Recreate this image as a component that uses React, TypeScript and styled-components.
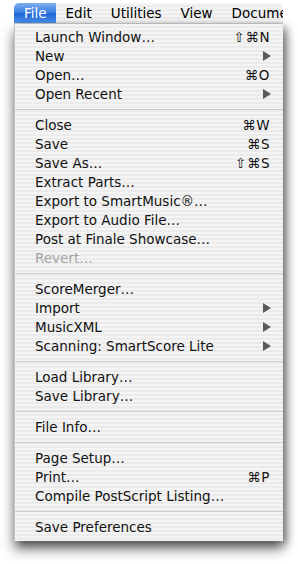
import React from "react";
import { styled, createGlobalStyle } from "styled-components";

const Global = createGlobalStyle`
    html, body {
        margin: 0;
        padding: 0;
        background: #ffffff;
    }
    body {
        font-family: "DejaVu Sans", "Liberation Sans", sans-serif;
    }
`

const pinstripe = `repeating-linear-gradient(
    to bottom,
    #f4f4f4 0px,
    #f4f4f4 2px,
    #ebebeb 2px,
    #ebebeb 4px
)`

const Stage = styled.div`
    width: 298px;
    height: 564px;
    padding: 3px 0 0 14px;
    box-sizing: border-box;
`

const Frame = styled.div`
    width: 269px;
    display: flex;
    flex-direction: column;
`

const MenuBar = styled.div`
    height: 20px;
    display: flex;
    align-items: stretch;
    background: ${pinstripe};
    border-top-left-radius: 5px;
    border-top-right-radius: 5px;
    overflow: hidden;
    border-bottom: 1px solid #cfcfcf;
`

const BarItem = styled.div<{ $active?: boolean }>`
    display: flex;
    align-items: center;
    padding: 0 9px 0 10px;
    font-size: 13.5px;
    white-space: nowrap;
    color: ${p => (p.$active ? "#ffffff" : "#000000")};
    background: ${p => (p.$active
        ? "linear-gradient(to bottom, #7fb1f0 0%, #3d80e4 45%, #2467d8 55%, #4a92ef 100%)"
        : "transparent")};
`

const Panel = styled.div`
    height: 517px;
    box-sizing: border-box;
    padding: 3px 0 5px;
    background: ${pinstripe};
    box-shadow: 0 8px 12px rgba(0, 0, 0, 0.55), 4px 3px 8px rgba(0, 0, 0, 0.35);
    border-left: 1px solid #c4c4c4;
    display: flex;
    flex-direction: column;
`

const Item = styled.div<{ $disabled?: boolean }>`
    height: 19px;
    display: flex;
    align-items: center;
    justify-content: space-between;
    padding: 0 13px 0 20px;
    font-size: 13.5px;
    white-space: nowrap;
    color: ${p => (p.$disabled ? "#a3a3a3" : "#111111")};
`

const Shortcut = styled.span`
    font-size: 13.5px;
    letter-spacing: 0.5px;
`

const Separator = styled.div`
    height: 12px;
    display: flex;
    align-items: center;
    &::after {
        content: "";
        flex: 1;
        height: 1px;
        background: #cbcbcb;
    }
`

const Arrow = () => (
    <svg width="8" height="10" viewBox="0 0 8 10" style={{ marginRight: -1 }}>
        <path d="M0 0 L8 5 L0 10 Z" fill="#5a5a5a" />
    </svg>
)

type Entry =
    | { label: string; key?: string; sub?: boolean; disabled?: boolean }
    | "sep";

const entries: Entry[] = [
    { label: "Launch Window…", key: "⇧⌘N" },
    { label: "New", sub: true },
    { label: "Open…", key: "⌘O" },
    { label: "Open Recent", sub: true },
    "sep",
    { label: "Close", key: "⌘W" },
    { label: "Save", key: "⌘S" },
    { label: "Save As…", key: "⇧⌘S" },
    { label: "Extract Parts…" },
    { label: "Export to SmartMusic®…" },
    { label: "Export to Audio File…" },
    { label: "Post at Finale Showcase…" },
    { label: "Revert…", disabled: true },
    "sep",
    { label: "ScoreMerger…" },
    { label: "Import", sub: true },
    { label: "MusicXML", sub: true },
    { label: "Scanning: SmartScore Lite", sub: true },
    "sep",
    { label: "Load Library…" },
    { label: "Save Library…" },
    "sep",
    { label: "File Info…" },
    "sep",
    { label: "Page Setup…" },
    { label: "Print…", key: "⌘P" },
    { label: "Compile PostScript Listing…" },
    "sep",
    { label: "Save Preferences" },
]

const App: React.FC = () => {
    return (
        <Stage>
            <Global />
            <Frame>
                <MenuBar>
                    <BarItem $active>File</BarItem>
                    <BarItem>Edit</BarItem>
                    <BarItem>Utilities</BarItem>
                    <BarItem>View</BarItem>
                    <BarItem>Document</BarItem>
                </MenuBar>
                <Panel>
                    {entries.map((e, i) => {
                        if (e === "sep") {
                            return <Separator key={i} />
                        }
                        return (
                            <Item key={i} $disabled={e.disabled}>
                                <span>{e.label}</span>
                                {e.key && <Shortcut>{e.key}</Shortcut>}
                                {e.sub && <Arrow />}
                            </Item>
                        )
                    })}
                </Panel>
            </Frame>
        </Stage>
    )
}

export default App;
